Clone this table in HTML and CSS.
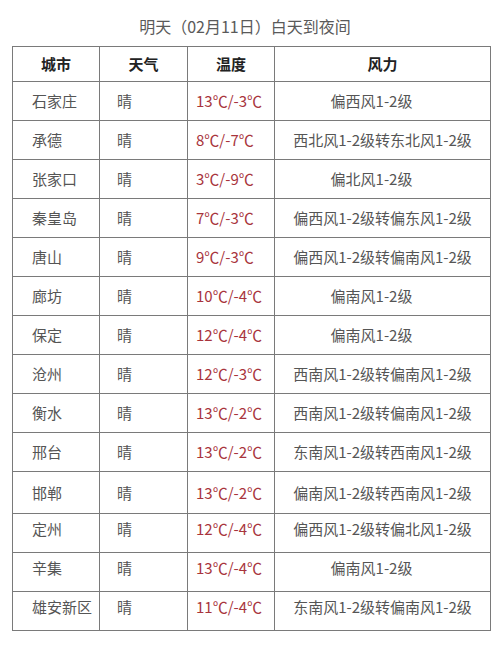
FILE: index.html
```html
<!DOCTYPE html>
<html lang="zh-CN">
<head>
<meta charset="utf-8">
<link rel="stylesheet" href="styles.css">
</head>
<body>
<div class="page">
  <h1 class="title">明天（02月11日）白天到夜间</h1>
  <table class="weather">
    <colgroup>
      <col class="c-city"><col class="c-sky"><col class="c-temp"><col class="c-wind">
    </colgroup>
    <thead>
      <tr class="head"><th>城市</th><th>天气</th><th>温度</th><th>风力</th></tr>
    </thead>
    <tbody>
      <tr><td class="city">石家庄</td><td class="sky">晴</td><td class="temp">13℃/-3℃</td><td class="wind short">偏西风1-2级</td></tr>
      <tr><td class="city">承德</td><td class="sky">晴</td><td class="temp">8℃/-7℃</td><td class="wind">西北风1-2级转东北风1-2级</td></tr>
      <tr><td class="city">张家口</td><td class="sky">晴</td><td class="temp">3℃/-9℃</td><td class="wind short">偏北风1-2级</td></tr>
      <tr><td class="city">秦皇岛</td><td class="sky">晴</td><td class="temp">7℃/-3℃</td><td class="wind">偏西风1-2级转偏东风1-2级</td></tr>
      <tr><td class="city">唐山</td><td class="sky">晴</td><td class="temp">9℃/-3℃</td><td class="wind">偏西风1-2级转偏南风1-2级</td></tr>
      <tr><td class="city">廊坊</td><td class="sky">晴</td><td class="temp">10℃/-4℃</td><td class="wind short">偏南风1-2级</td></tr>
      <tr><td class="city">保定</td><td class="sky">晴</td><td class="temp">12℃/-4℃</td><td class="wind short">偏南风1-2级</td></tr>
      <tr><td class="city">沧州</td><td class="sky">晴</td><td class="temp">12℃/-3℃</td><td class="wind">西南风1-2级转偏南风1-2级</td></tr>
      <tr><td class="city">衡水</td><td class="sky">晴</td><td class="temp">13℃/-2℃</td><td class="wind">西南风1-2级转偏南风1-2级</td></tr>
      <tr><td class="city">邢台</td><td class="sky">晴</td><td class="temp">13℃/-2℃</td><td class="wind">东南风1-2级转西南风1-2级</td></tr>
      <tr class="tall"><td class="city">邯郸</td><td class="sky">晴</td><td class="temp">13℃/-2℃</td><td class="wind">偏南风1-2级转西南风1-2级</td></tr>
      <tr class="low"><td class="city">定州</td><td class="sky">晴</td><td class="temp">12℃/-4℃</td><td class="wind">偏西风1-2级转偏北风1-2级</td></tr>
      <tr class="low"><td class="city">辛集</td><td class="sky">晴</td><td class="temp">13℃/-4℃</td><td class="wind short">偏南风1-2级</td></tr>
      <tr class="low"><td class="city">雄安新区</td><td class="sky">晴</td><td class="temp">11℃/-4℃</td><td class="wind">东南风1-2级转偏南风1-2级</td></tr>
    </tbody>
  </table>
</div>
</body>
</html>
```
FILE: styles.css
```css
html, body {
  margin: 0;
  padding: 0;
  background: #ffffff;
}
body {
  font-family: "Noto Sans CJK SC", "Noto Sans", sans-serif;
  color: #555555;
}
.page {
  width: 500px;
  padding-top: 16px;
}
.title {
  margin: 0 0 10px 0;
  padding-right: 10px;
  font-size: 16px;
  line-height: 20px;
  font-weight: 400;
  text-align: center;
  color: #5a5a5a;
}
.weather {
  margin-left: 12px;
  width: 478px;
  border-collapse: collapse;
  table-layout: fixed;
  font-size: 15px;
}
.c-city { width: 87px; }
.c-sky { width: 88px; }
.c-temp { width: 87px; }
.c-wind { width: 216px; }
.weather th,
.weather td {
  border: 1px solid #7a7a7a;
  padding: 0;
  height: 38px;
  line-height: 20px;
  vertical-align: middle;
  white-space: nowrap;
}
.weather th {
  height: 34px;
  font-weight: 700;
  color: #222222;
  text-align: center;
  font-size: 15px;
}
.city {
  padding-left: 19px !important;
  text-align: left;
}
.sky {
  padding-left: 17px !important;
  text-align: left;
}
.temp {
  padding-left: 8px !important;
  text-align: left;
  color: #a8343c;
}
.wind {
  text-align: center;
}
.wind.short {
  padding-right: 22px !important;
}
.tall td {
  height: 41px;
}
.low td {
  height: 30px;
  padding-bottom: 8px !important;
}
```
